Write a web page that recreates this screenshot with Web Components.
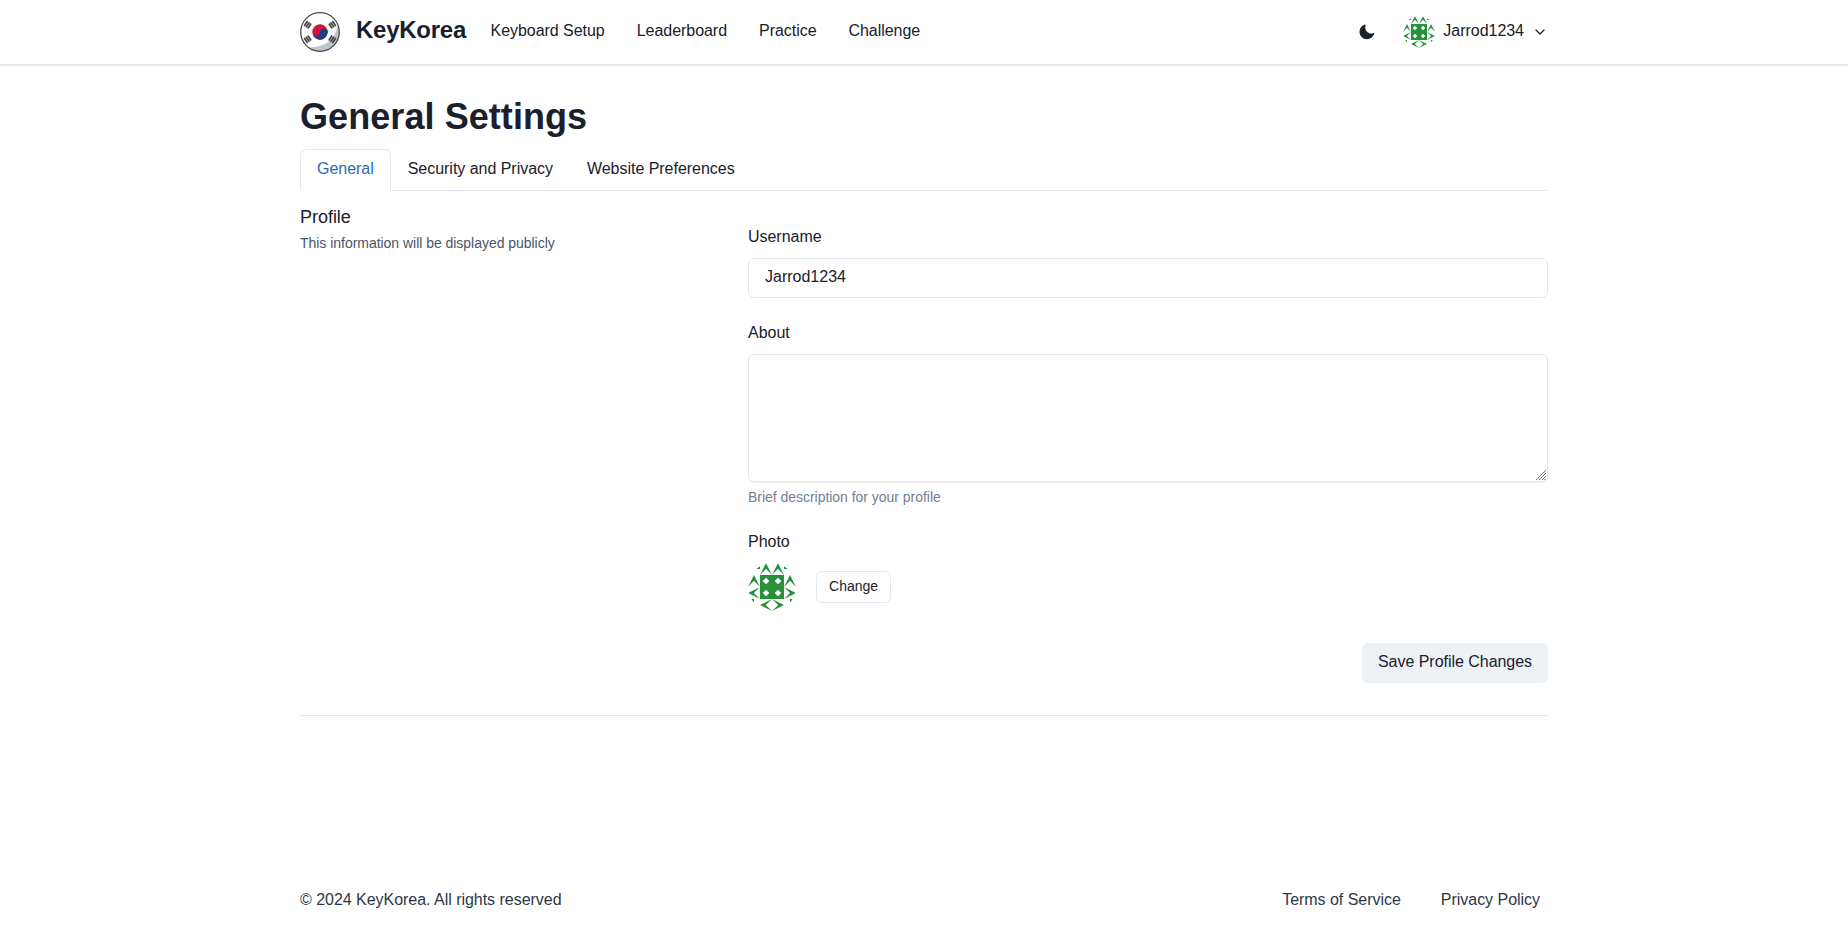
<!DOCTYPE html>
<html lang="en"><head><meta charset="utf-8"><title>KeyKorea</title>
<style>
body{margin:0;background:#fff;color:#1a202c;font:16px/24px "Liberation Sans",Arial,sans-serif;letter-spacing:-.03px}
</style></head><body>
<kk-app></kk-app>
<script>
const define=(name,html)=>{
  const t=document.createElement('template');t.innerHTML=html;
  customElements.define(name,class extends HTMLElement{
    constructor(){super();this.attachShadow({mode:'open'}).append(t.content.cloneNode(true));}
  });
};
const arrow='M0 12L6 0L12 12L6 5.8Z';
define('kk-avatar',`<style>:host{display:block;width:48px;height:48px;border-radius:50%;overflow:hidden;flex:none}svg{display:block;width:100%;height:100%}</style>
<svg viewBox="0 0 48 48" fill="#28913b">
<path d="M12 12h24v24H12z"/>
<g fill="#fff"><path d="M18 14.700l3.300 3.300-3.300 3.300-3.300-3.300zM30 14.700l3.300 3.300-3.300 3.300-3.300-3.300zM18 26.700l3.300 3.300-3.300 3.300-3.300-3.300zM30 26.700l3.300 3.300-3.300 3.300-3.300-3.300z"/></g>
<path d="${arrow}" transform="translate(12 0)"/><path d="${arrow}" transform="translate(24 0)"/>
<path d="${arrow}" transform="translate(0 12)"/><path d="${arrow}" transform="translate(36 12)"/>
<path d="${arrow}" transform="translate(0 36) rotate(-90)"/><path d="${arrow}" transform="translate(48 24) rotate(90)"/>
<path d="${arrow}" transform="translate(12 48) rotate(-90)"/><path d="${arrow}" transform="translate(36 36) rotate(90)"/>
<path d="M8 6L12 3V6zM36 3l4 3h-4zM3 36h3v4zM45 36h-3v4z"/>
</svg>`);
define('kk-logo',`<style>:host{display:block;width:40px;height:40px;flex:none}svg{display:block}</style>
<svg width="40" height="40" viewBox="0 0 40 40"><circle cx="20" cy="20" r="19.3" fill="#fff"/>
<path d="M37.500 12A19.300 19.300 0 0 1 8 35Q18 36 26 31.500Q36.500 25 37.500 12Z" fill="#b9c6cf"/>
<circle cx="20" cy="20" r="19.3" fill="none" stroke="#474b50" stroke-width="1.3"/>
<g transform="translate(20 20) rotate(4)"><circle r="7.7" fill="#d01735"/><path d="M-7.7 0A7.7 7.7 0 0 0 7.7 0A3.85 3.85 0 0 0 0 0A3.85 3.85 0 0 1 -7.7 0" fill="#21407b"/></g>
<g stroke="#444" stroke-width="1.7"><path d="M4.200 14l3.400-5M6 15.200l3.400-5M7.800 16.400l3.400-5"/><path d="M35.800 14l-3.400-5M34 15.200l-3.400-5M32.200 16.400l-3.400-5"/><path d="M4.200 26l3.400 5M6 24.800l3.400 5M7.800 23.600l3.400 5"/><path d="M35.800 26l-3.400 5M34 24.800l-3.400 5M32.200 23.600l-3.400 5"/></g>
</svg>`);
define('kk-container',`<style>:host{display:block;width:1248px;margin:0 auto}</style><slot></slot>`);
define('kk-header',`<style>:host{display:block;border-bottom:2px solid #e2e8f0}.row{display:flex;align-items:center;height:64px}
.brand{font-weight:700;font-size:24px;line-height:32px;letter-spacing:-.25px;margin:-4px 0 0 16px;width:110px;white-space:nowrap}
nav{display:flex;gap:32px;margin:-2px 0 0 24.500px;letter-spacing:-.04px}.moon{margin-left:auto;margin-right:27px}.user{display:flex;align-items:center}
kk-avatar{width:32px;height:32px}.name{margin:-2px 8px 0 8px}svg{display:block}</style>
<kk-container><div class="row"><kk-logo></kk-logo><span class="brand">KeyKorea</span>
<nav><span>Keyboard Setup</span><span>Leaderboard</span><span>Practice</span><span>Challenge</span></nav>
<svg class="moon" width="18" height="18" viewBox="0 0 24 24" fill="#1a202c"><path d="M21.4 13.7c-.3-.3-.7-.3-1.1-.2a8.100 8.100 0 0 1-2.600.4c-4.400 0-8-3.600-8-8 0-.9.100-1.700.4-2.600.1-.3 0-.8-.2-1.100-.3-.3-.7-.4-1.100-.2C4.700 3.500 2 7.300 2 11.500c0 5.500 4.500 10 10 10 4.200 0 8-2.700 9.600-6.700.100-.4 0-.8-.2-1.100z"/></svg>
<div class="user"><kk-avatar></kk-avatar><span class="name">Jarrod1234</span>
<svg width="16" height="16" viewBox="0 0 16 16" fill="none" stroke="#1a202c" stroke-width="1.3" stroke-linecap="round" stroke-linejoin="round"><path d="M4 6l4 4 4-4"/></svg></div></div></kk-container>`);
define('kk-tabs',`<style>:host{display:flex;border-bottom:1px solid #e2e8f0}::slotted(*){padding:7px 16px 9px;border:1px solid transparent;border-bottom:0;white-space:nowrap}
::slotted([selected]){color:#2b6cb0;border:1px solid #e2e8f0;border-bottom-color:#fff;border-radius:6px 6px 0 0;margin-bottom:-1px}</style><slot></slot>`);
define('kk-field',`<style>:host{display:block}label{display:block;margin-bottom:8px;position:relative;top:-1px}</style><label><slot name="label"></slot></label><slot></slot>`);
define('kk-button',`<style>:host{display:flex;align-items:center;justify-content:center;box-sizing:border-box;height:40px;padding:0 16px 2px;background:#edf2f7;border-radius:6px;white-space:nowrap}
:host([outline]){height:32px;padding:0 12px 2px;background:none;border:1px solid #e2e8f0;font-size:14px}</style><slot></slot>`);
define('kk-profile',`<style>:host{display:grid;grid-template-columns:448px 800px;padding-top:15px}
h2{font-size:18px;line-height:24px;font-weight:400;margin:-1px 0 0}p{font-size:14px;line-height:21px;margin:4px 0 0;color:#4a5568}
.form{display:flex;flex-direction:column;padding-top:20px}
input,textarea{display:block;box-sizing:border-box;width:100%;border:1px solid #e2e8f0;border-radius:6px;background:#fff;color:#1a202c;font:inherit;padding:0 16px 2px;outline:0}
input{height:40px}textarea{height:128px;padding:8px 16px;resize:none;box-shadow:0 1px 2px rgba(0,0,0,.05)}
.area{position:relative}.grip{position:absolute;right:2px;bottom:2px}
.help{font-size:14px;line-height:20px;margin-top:5px;color:#718096}
.photo{display:flex;align-items:center;gap:20px}.change{width:75px}.save{align-self:flex-end;width:186px;margin-top:32px}
.about{margin-top:24px}.pic{margin-top:24px}</style>
<section><h2>Profile</h2><p>This information will be displayed publicly</p></section>
<div class="form"><kk-field><span slot="label">Username</span><input value="Jarrod1234"></kk-field>
<kk-field class="about"><span slot="label">About</span><div class="area"><textarea></textarea><svg class="grip" width="10" height="10" viewBox="0 0 10 10" stroke="#555" stroke-width=".8"><path d="M0 10L10 0M3 10L10 3M6 10l4-4M8.500 10L10 8.500"/></svg></div><div class="help">Brief description for your profile</div></kk-field>
<kk-field class="pic"><span slot="label">Photo</span><div class="photo"><kk-avatar></kk-avatar><kk-button outline class="change">Change</kk-button></div></kk-field>
<kk-button class="save">Save Profile Changes</kk-button></div>`);
define('kk-footer',`<style>:host{display:flex;justify-content:space-between;color:#2d3748}div{display:flex;gap:40px;padding-right:8px;letter-spacing:-.03px}</style>
<span>© 2024 KeyKorea. All rights reserved</span><div><span>Terms of Service</span><span>Privacy Policy</span></div>`);
define('kk-app',`<style>:host{display:flex;flex-direction:column;height:933px;overflow:hidden}
h1{font-size:36px;line-height:43px;letter-spacing:.07px;margin:29px 0 11px}.rule{height:1px;background:#e2e8f0;margin-top:32px}.foot{margin-top:auto;padding-bottom:21px}</style>
<kk-header></kk-header><kk-container><h1>General Settings</h1>
<kk-tabs><span selected>General</span><span>Security and Privacy</span><span>Website Preferences</span></kk-tabs>
<kk-profile></kk-profile><div class="rule"></div></kk-container>
<kk-container class="foot"><kk-footer></kk-footer></kk-container>`);
</script></body></html>
